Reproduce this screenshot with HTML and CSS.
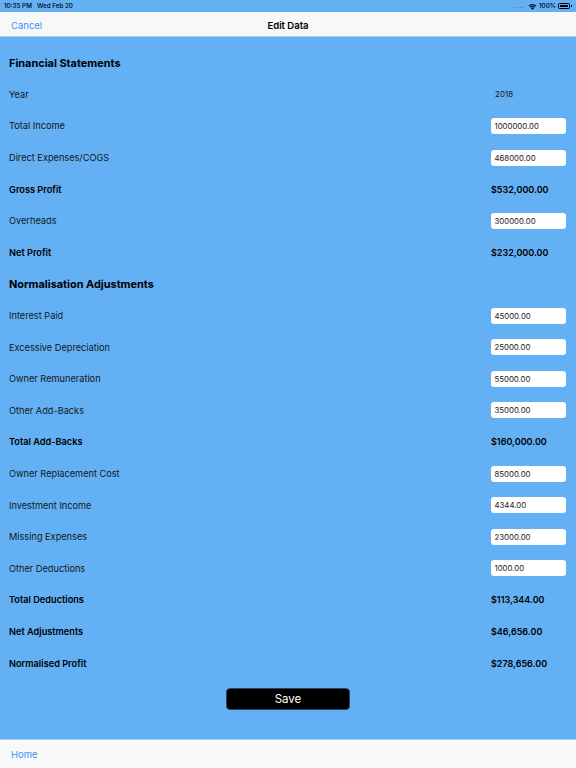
FILE: index.html
```html
<!DOCTYPE html>
<html>
<head>
<meta charset="utf-8">
<link rel="stylesheet" href="styles.css">
</head>
<body>
<div class="screen">
  <div class="status">
    <span class="time">10:35 PM&nbsp;&nbsp;&nbsp;Wed Feb 20</span>
    <span class="status-right">
      <span class="dots">....</span>
      <svg class="wifi" width="9" height="7" viewBox="0 0 18 14"><path d="M9 13.5 L6 10.3 A4.4 4.4 0 0 1 12 10.3 Z M3.6 7.8 A7.8 7.8 0 0 1 14.4 7.8 L13 9.3 A5.8 5.8 0 0 0 5 9.3 Z M1 5.1 A11.6 11.6 0 0 1 17 5.1 L15.6 6.6 A9.6 9.6 0 0 0 2.4 6.6 Z" fill="#000"/></svg>
      <span class="pct">100%</span>
      <span class="battery"><span class="batt-fill"></span></span><span class="batt-tip"></span>
    </span>
  </div>
  <div class="navbar">
    <span class="nav-left">Cancel</span>
    <span class="nav-title">Edit Data</span>
    <span class="nav-right"></span>
  </div>
  <div class="content">
    <div class="row heading">Financial Statements</div>
    <div class="row"><span class="label">Year</span><span class="value plain">2018</span></div>
    <div class="row"><span class="label">Total Income</span><span class="input">1000000.00</span></div>
    <div class="row"><span class="label">Direct Expenses/COGS</span><span class="input">468000.00</span></div>
    <div class="row bold"><span class="label">Gross Profit</span><span class="value">$532,000.00</span></div>
    <div class="row"><span class="label">Overheads</span><span class="input">300000.00</span></div>
    <div class="row bold"><span class="label">Net Profit</span><span class="value">$232,000.00</span></div>
    <div class="row heading">Normalisation Adjustments</div>
    <div class="row"><span class="label">Interest Paid</span><span class="input">45000.00</span></div>
    <div class="row"><span class="label">Excessive Depreciation</span><span class="input">25000.00</span></div>
    <div class="row"><span class="label">Owner Remuneration</span><span class="input">55000.00</span></div>
    <div class="row"><span class="label">Other Add-Backs</span><span class="input">35000.00</span></div>
    <div class="row bold"><span class="label">Total Add-Backs</span><span class="value">$160,000.00</span></div>
    <div class="row"><span class="label">Owner Replacement Cost</span><span class="input">85000.00</span></div>
    <div class="row"><span class="label">Investment Income</span><span class="input">4344.00</span></div>
    <div class="row"><span class="label">Missing Expenses</span><span class="input">23000.00</span></div>
    <div class="row"><span class="label">Other Deductions</span><span class="input">1000.00</span></div>
    <div class="row bold"><span class="label">Total Deductions</span><span class="value">$113,344.00</span></div>
    <div class="row bold"><span class="label">Net Adjustments</span><span class="value">$46,656.00</span></div>
    <div class="row bold"><span class="label">Normalised Profit</span><span class="value">$278,656.00</span></div>
    <div class="save-wrap"><button class="save">Save</button></div>
  </div>
  <div class="toolbar">
    <span class="nav-left">Home</span>
  </div>
</div>
</body>
</html>
```
FILE: styles.css
```css
* { box-sizing: border-box; }
html, body { margin: 0; padding: 0; }
body {
  font-family: Inter, "Liberation Sans", Arial, sans-serif;
  background: #64b0f5;
  color: #0a0a0a;
}
.screen {
  width: 576px;
  height: 768px;
  display: flex;
  flex-direction: column;
  overflow: hidden;
}
.status {
  height: 12px;
  display: flex;
  align-items: center;
  justify-content: space-between;
  padding: 0 4px 0 4px;
  font-size: 6.3px;
  font-weight: 500;
  color: #000;
}
.status-right {
  display: flex;
  align-items: center;
  gap: 2px;
}
.dots { color: #3a6a98; letter-spacing: 0.5px; margin-right: 2px; }
.wifi { display: block; }
.battery {
  width: 12px;
  height: 5.5px;
  border: 0.8px solid #000;
  border-radius: 1.5px;
  padding: 0.6px;
  display: flex;
}
.batt-fill { flex: 1; background: #000; border-radius: 0.5px; }
.batt-tip { width: 1px; height: 2.5px; background: #000; margin-left: -1px; }
.navbar {
  height: 25px;
  background: #f8f8f8;
  border-bottom: 1px solid #a9d2f8;
  display: flex;
  align-items: center;
  justify-content: space-between;
  padding: 2px 11px 0 11px;
  font-size: 9.5px;
}
.nav-left { color: #3b92f6; width: 60px; }
.nav-right { width: 60px; }
.nav-title { font-weight: 600; color: #000; font-size: 9.5px; }
.content {
  flex: 1;
  padding: 10px 10px 0 9px;
  display: flex;
  flex-direction: column;
}
.row {
  height: 31.6px;
  display: flex;
  align-items: center;
  justify-content: space-between;
  font-size: 9.2px;
  color: #101820;
}
.row.heading {
  font-size: 10.9px;
  font-weight: 700;
  color: #000;
}
.row.bold { font-weight: 600; color: #000; }
.value {
  width: 75px;
  font-size: 9px;
}
.value.plain { padding-left: 4px; font-size: 8px; font-weight: 400; }
.input {
  width: 75px;
  height: 16px;
  background: #fff;
  border-radius: 3px;
  padding-left: 3.5px;
  display: flex;
  align-items: center;
  font-size: 7.8px;
  color: #222;
}
.save-wrap {
  display: flex;
  justify-content: center;
  margin-top: 9px;
  padding-left: 1px;
}
.save {
  width: 124px;
  height: 22px;
  background: #000;
  color: #fff;
  border: 1px solid #2b4460;
  border-radius: 4px;
  font-family: Inter, "Liberation Sans", Arial, sans-serif;
  font-size: 11.5px;
  padding: 0;
}
.toolbar {
  height: 29px;
  background: #f9f9f9;
  border-top: 1px solid #a9d2f8;
  display: flex;
  align-items: center;
  padding: 0 11px;
  font-size: 9.5px;
}
```
